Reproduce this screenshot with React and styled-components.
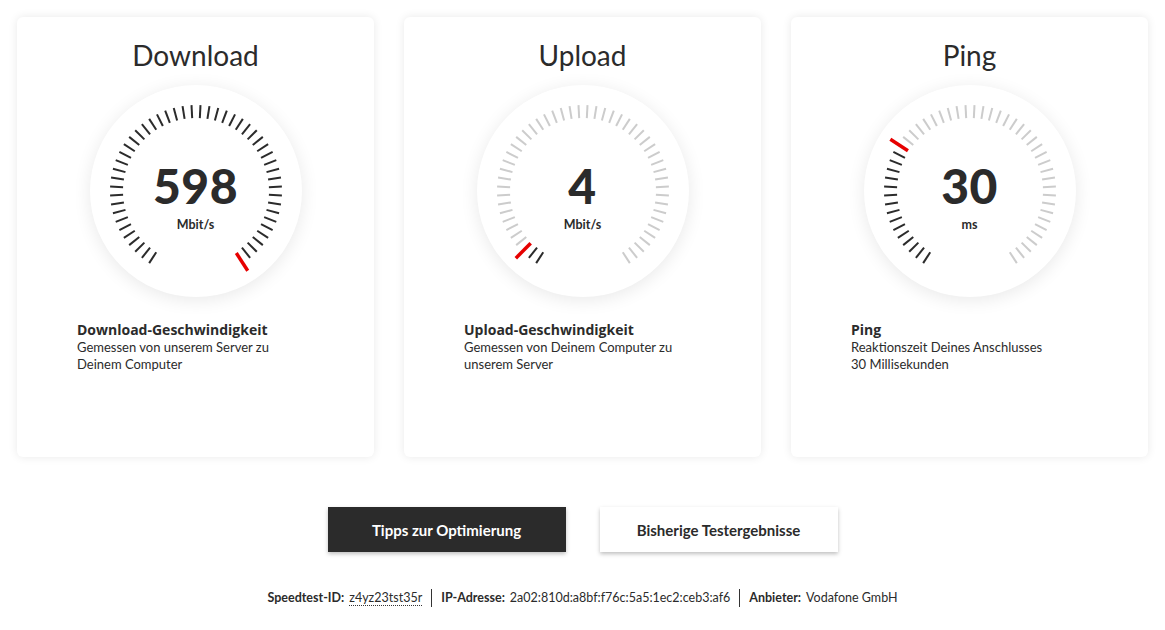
import React from "react";
import styled, { createGlobalStyle } from "styled-components";

const Global = createGlobalStyle`
  body {
    margin: 0;
    background: #fff;
    font-family: Lato, "Open Sans", sans-serif;
    color: #333;
  }
`;

const Page = styled.div`
  width: 1165px;
  padding: 17px 17px 0;
  box-sizing: border-box;
`;

const Cards = styled.div`
  display: grid;
  grid-template-columns: repeat(3, 1fr);
  gap: 30px;
`;

const Card = styled.div`
  background: #fff;
  border-radius: 6px;
  box-shadow: 0 0 10px rgba(0, 0, 0, 0.09);
  height: 440px;
  box-sizing: border-box;
  padding: 21px 60px 0;
  display: flex;
  flex-direction: column;
  align-items: center;
`;

const Title = styled.h2`
  margin: 0;
  font-size: 28px;
  line-height: 34px;
  font-weight: 400;
  color: #2b2b2b;
`;

const Dial = styled.div`
  position: relative;
  width: 212px;
  height: 212px;
  margin-top: 13px;
  border-radius: 50%;
  background: #fff;
  box-shadow: 0 3px 18px rgba(0, 0, 0, 0.09);
`;

const Ticks = styled.svg`
  position: absolute;
  inset: 0;
`;

const Readout = styled.div`
  position: absolute;
  inset: 0;
  display: flex;
  flex-direction: column;
  align-items: center;
  justify-content: center;
  padding-top: 12px;
  box-sizing: border-box;
`;

const Value = styled.div`
  font-size: 48px;
  font-weight: 900;
  line-height: 48px;
  color: #2b2b2b;
  letter-spacing: 0.5px;
`;

const Unit = styled.div`
  font-size: 12.5px;
  font-weight: 700;
  margin-top: 7px;
  color: #2b2b2b;
`;

const Info = styled.div`
  align-self: stretch;
  margin-top: 24px;
  font-size: 13px;
  line-height: 17px;
  color: #2b2b2b;
`;

const InfoTitle = styled.div`
  font-family: "Open Sans", Lato, sans-serif;
  font-size: 14px;
  font-weight: 700;
  line-height: 18px;
`;

const Actions = styled.div`
  display: flex;
  justify-content: center;
  gap: 34px;
  margin-top: 50px;
`;

const Button = styled.button`
  width: 238px;
  height: 45px;
  border: none;
  font-family: inherit;
  font-size: 15px;
  font-weight: 700;
  cursor: pointer;
  background: ${(p) => (p.$dark ? "#2b2b2b" : "#fff")};
  color: ${(p) => (p.$dark ? "#fff" : "#2b2b2b")};
  box-shadow: 0 2px 4px rgba(0, 0, 0, 0.25);
`;

const Footer = styled.div`
  display: flex;
  justify-content: center;
  align-items: center;
  margin-top: 37px;
  font-size: 12.5px;
  color: #2b2b2b;
`;

const Item = styled.div`
  padding: 0 9px;
  border-left: ${(p) => (p.$first ? "none" : "1px solid #333")};
  line-height: 18px;
`;

const Label = styled.b`
  margin-right: 5px;
`;

const Dotted = styled.span`
  border-bottom: 1px dotted #333;
`;

function Gauge({ value, unit, red }) {
  const ticks = [];
  for (let i = 0; i < 50; i++) {
    const a = ((-147 + 6 * i) * Math.PI) / 180;
    const isRed = i === red;
    const r1 = isRed ? 74 : 73;
    const r2 = isRed ? 95 : 86;
    const s = Math.sin(a);
    const c = Math.cos(a);
    ticks.push(
      <line
        key={i}
        x1={106 + r1 * s}
        y1={106 - r1 * c}
        x2={106 + r2 * s}
        y2={106 - r2 * c}
        stroke={isRed ? "#e60000" : i < red ? "#2b2b2b" : "#cccccc"}
        strokeWidth={isRed ? 3.5 : 2}
      />
    );
  }
  return (
    <Dial>
      <Ticks width="212" height="212" viewBox="0 0 212 212">
        {ticks}
      </Ticks>
      <Readout>
        <Value>{value}</Value>
        <Unit>{unit}</Unit>
      </Readout>
    </Dial>
  );
}

const data = [
  {
    title: "Download",
    value: "598",
    unit: "Mbit/s",
    red: 49,
    head: "Download-Geschwindigkeit",
    lines: ["Gemessen von unserem Server zu Deinem Computer"],
  },
  {
    title: "Upload",
    value: "4",
    unit: "Mbit/s",
    red: 2,
    head: "Upload-Geschwindigkeit",
    lines: ["Gemessen von Deinem Computer zu unserem Server"],
  },
  {
    title: "Ping",
    value: "30",
    unit: "ms",
    red: 15,
    head: "Ping",
    lines: ["Reaktionszeit Deines Anschlusses", "30 Millisekunden"],
  },
];

export default function App() {
  return (
    <Page>
      <Global />
      <Cards>
        {data.map((d) => (
          <Card key={d.title}>
            <Title>{d.title}</Title>
            <Gauge value={d.value} unit={d.unit} red={d.red} />
            <Info>
              <InfoTitle>{d.head}</InfoTitle>
              {d.lines.map((l) => (
                <div key={l}>{l}</div>
              ))}
            </Info>
          </Card>
        ))}
      </Cards>
      <Actions>
        <Button $dark>Tipps zur Optimierung</Button>
        <Button>Bisherige Testergebnisse</Button>
      </Actions>
      <Footer>
        <Item $first>
          <Label>Speedtest-ID:</Label>
          <Dotted>z4yz23tst35r</Dotted>
        </Item>
        <Item>
          <Label>IP-Adresse:</Label>
          2a02:810d:a8bf:f76c:5a5:1ec2:ceb3:af6
        </Item>
        <Item>
          <Label>Anbieter:</Label>
          Vodafone GmbH
        </Item>
      </Footer>
    </Page>
  );
}
